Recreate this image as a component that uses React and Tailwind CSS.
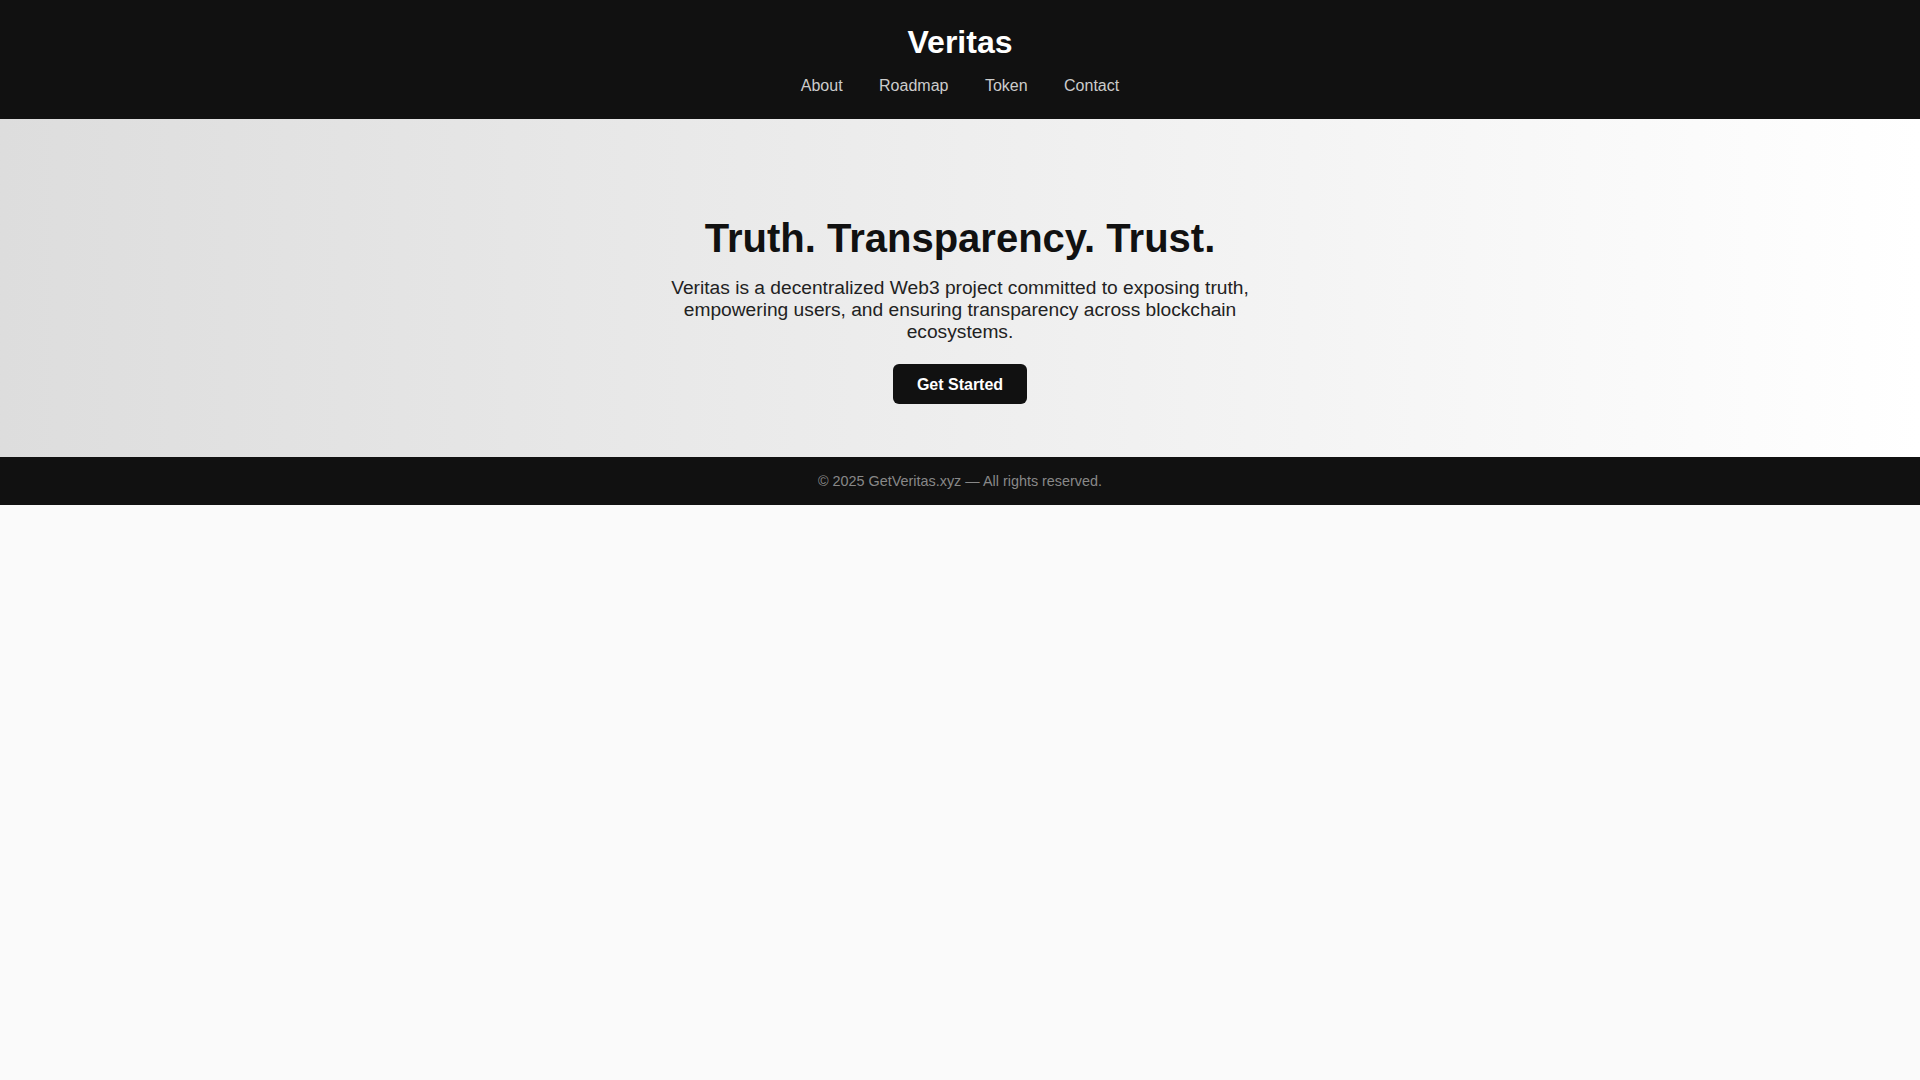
import React from "react";

const links = ["About", "Roadmap", "Token", "Contact"];

export default function App() {
  return (
    <div className="min-h-screen bg-[#fafafa] font-['Liberation_Sans',Arial,sans-serif]">
      {/* Header */}
      <header className="bg-[#111111] text-white pt-[22px] pb-[21px] text-center">
        <h1 className="text-[32px] font-bold leading-10">Veritas</h1>
        <nav className="mt-[12px] leading-6 text-base">
          {links.map((l) => (
            <React.Fragment key={l}>
              <a href="#" className="mx-4 text-[#cccccc]">
                {l}
              </a>{" "}
            </React.Fragment>
          ))}
        </nav>
      </header>

      {/* Hero */}
      <section className="bg-gradient-to-r from-[#dddddd] to-[#ffffff] pt-[96px] pb-[53px] flex flex-col items-center text-center">
        <h2 className="text-[40px] leading-[46px] font-bold text-[#111111]">
          Truth. Transparency. Trust.
        </h2>
        <p className="mt-[16px] max-w-[600px] text-[19.2px] leading-[22px] text-[#222222]">
          Veritas is a decentralized Web3 project committed to exposing truth,
          empowering users, and ensuring transparency across blockchain
          ecosystems.
        </p>
        <button className="mt-[21px] bg-[#111111] text-white font-bold text-base leading-[19px] px-6 py-[10.5px] rounded-md">
          Get Started
        </button>
      </section>

      {/* Footer */}
      <footer className="bg-[#111111] py-4 text-center text-[14.4px] leading-4 text-[#888888]">
        © 2025 GetVeritas.xyz — All rights reserved.
      </footer>
    </div>
  );
}
